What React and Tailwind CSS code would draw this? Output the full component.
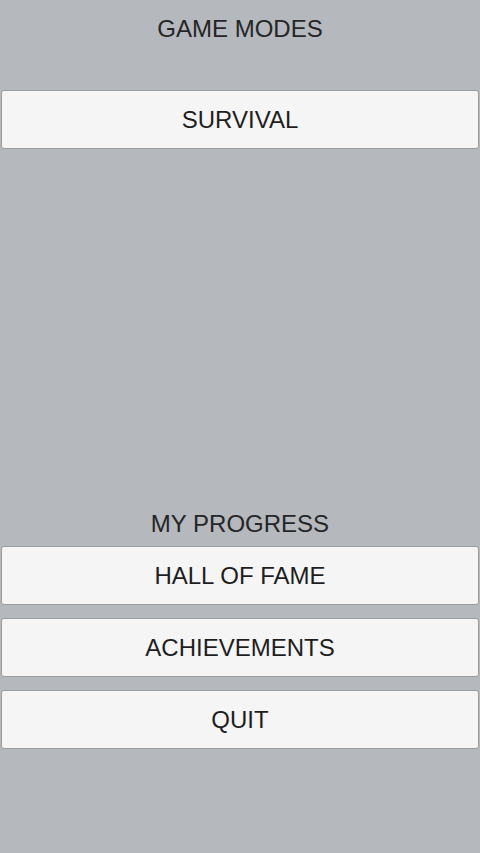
import React from 'react';

const MenuButton = ({ label }) => (
  <button className="w-full h-[59px] flex items-center justify-center bg-[#f5f5f5] border border-[#9c9c9e] rounded-[3px] text-[24px] leading-[24px] text-[#1e1e1e]">
    {label}
  </button>
);

const Heading = ({ children, className = '' }) => (
  <h2 className={`text-center text-[24px] leading-[24px] text-[#262626] ${className}`}>{children}</h2>
);

export default function App() {
  return (
    <div
      className="w-[480px] h-[853px] bg-[#b5b8bd] flex flex-col px-px"
      style={{ fontFamily: '"Liberation Sans", Arial, sans-serif' }}
    >
      <Heading className="mt-[17px]">GAME MODES</Heading>
      <div className="mt-[49px]">
        <MenuButton label="SURVIVAL" />
      </div>

      <Heading className="mt-[363px]">MY PROGRESS</Heading>
      <div className="mt-[10px] flex flex-col gap-[13px]">
        <MenuButton label="HALL OF FAME" />
        <MenuButton label="ACHIEVEMENTS" />
        <MenuButton label="QUIT" />
      </div>
    </div>
  );
}
